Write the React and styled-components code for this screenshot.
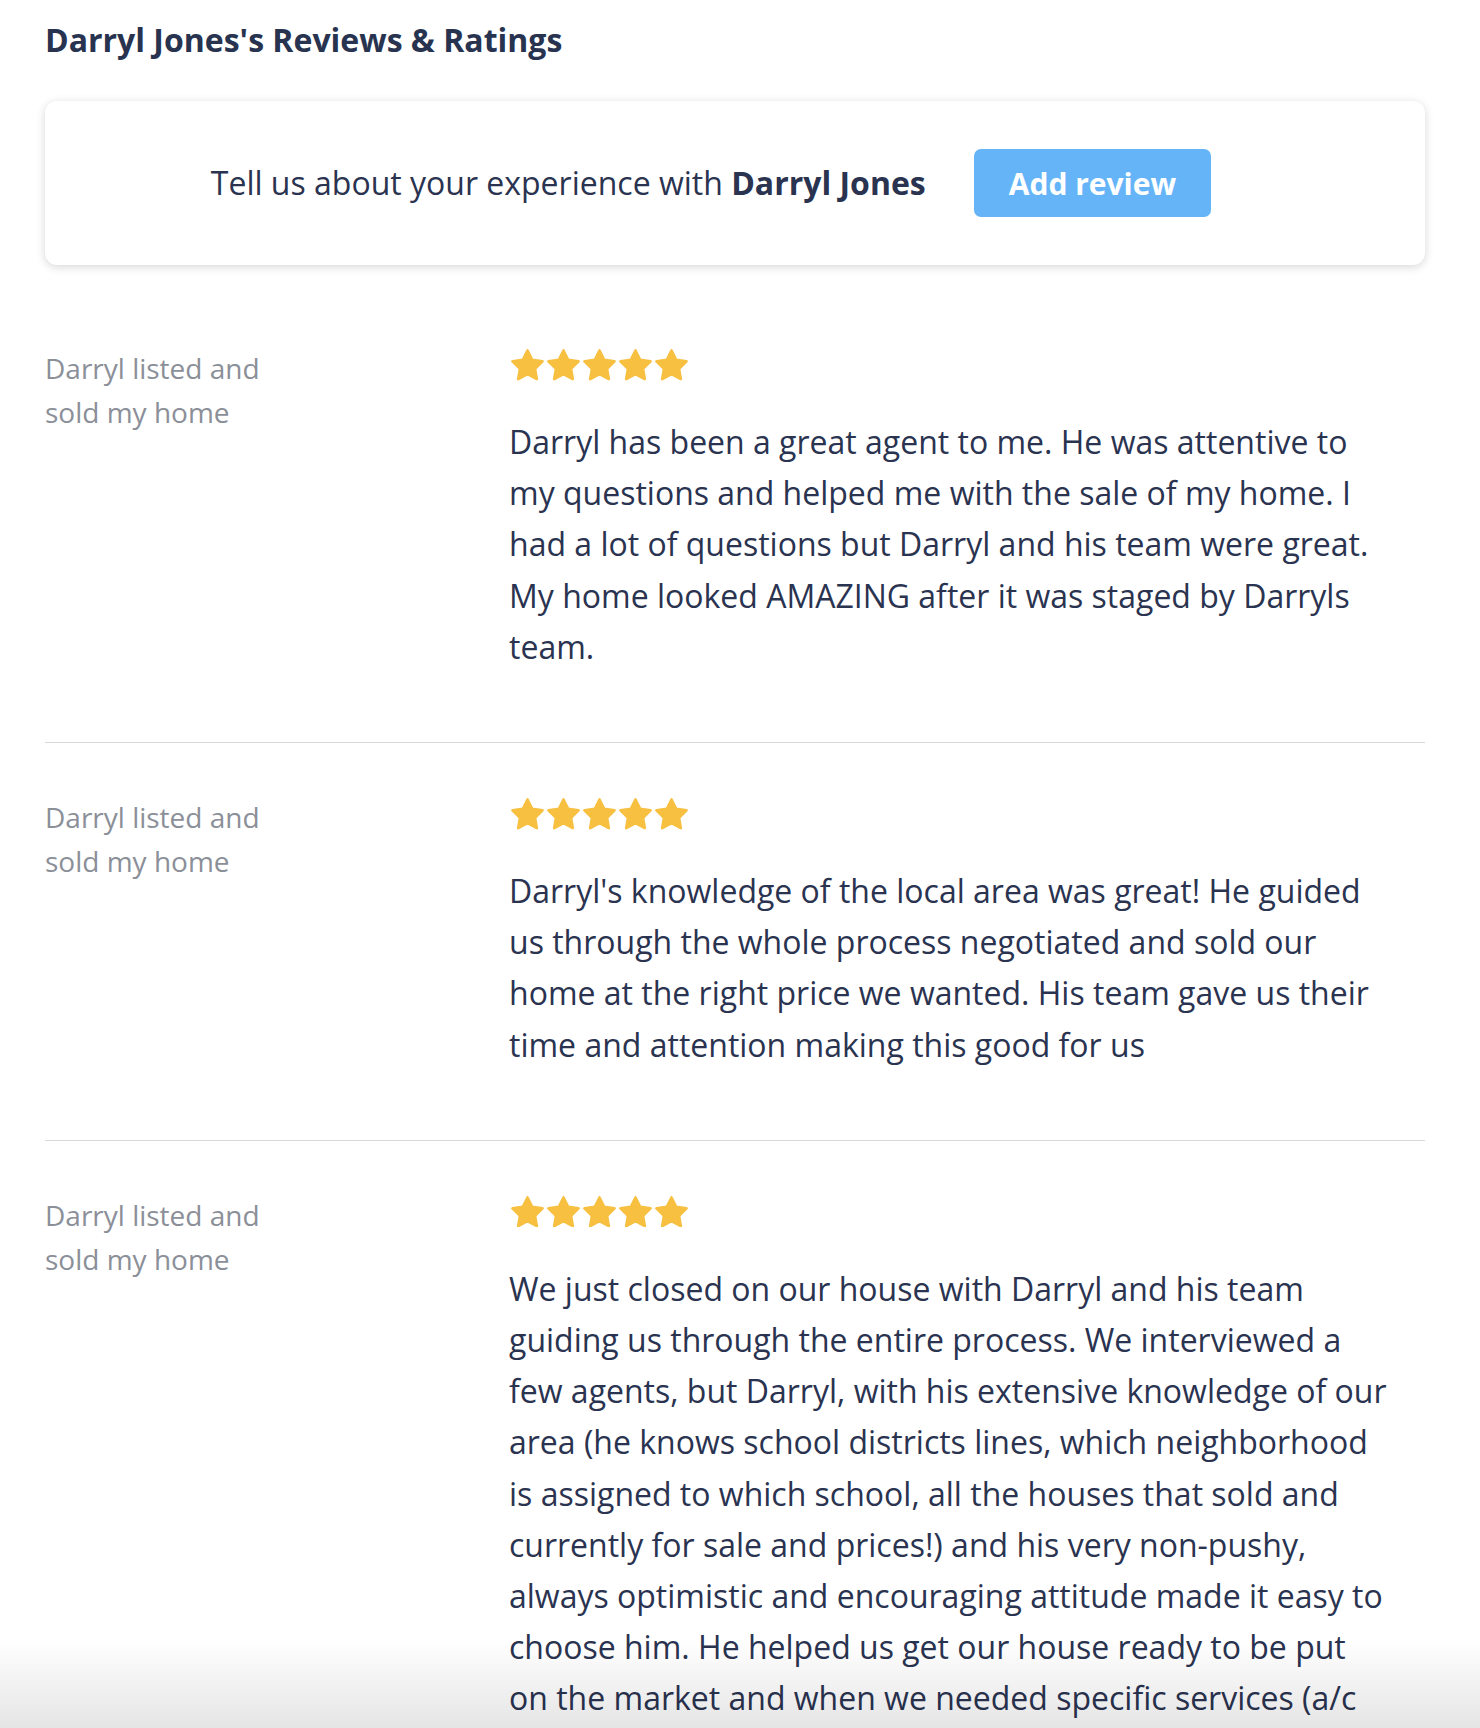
import React from "react";
import styled, { createGlobalStyle } from "styled-components";

const GlobalStyle = createGlobalStyle`
  html, body {
    margin: 0;
    padding: 0;
    background: #ffffff;
  }
  body {
    font-family: "Open Sans", "Liberation Sans", sans-serif;
    color: #2a3350;
    -webkit-font-smoothing: antialiased;
  }
  * { box-sizing: border-box; }
`;

const Page = styled.div`
  height: 100vh;
  overflow: hidden;
  padding: 18px 55px 0 45px;
`;

const Title = styled.h1`
  margin: 0;
  font-size: 32px;
  line-height: 44px;
  font-weight: 700;
  color: #283350;
`;

const PromptCard = styled.div`
  margin-top: 39px;
  height: 164px;
  background: #fff;
  border-radius: 12px;
  box-shadow: 0 2px 10px rgba(0, 0, 0, 0.16);
  display: flex;
  align-items: center;
  justify-content: center;
  gap: 48px;
  padding-right: 48px;
`;

const PromptText = styled.p`
  margin: 0;
  font-size: 32px;
  line-height: 44px;
  color: #2a3350;
  strong { font-weight: 700; }
`;

const AddButton = styled.button`
  height: 68px;
  padding: 0 35px;
  border: none;
  border-radius: 7px;
  background: #66b4f8;
  color: #fff;
  font-family: inherit;
  font-size: 30px;
  font-weight: 700;
  cursor: pointer;
`;

const ReviewList = styled.div`
  margin-top: 29px;
`;

const ReviewRow = styled.div`
  display: grid;
  grid-template-columns: 464px 1fr;
  padding: 52px 0 70px;
  border-bottom: 1px solid #d8d8d8;
`;

const Label = styled.div`
  font-size: 28px;
  line-height: 44px;
  color: #8b8f98;
  width: 240px;
`;

const Body = styled.div`
  padding-right: 36px;
`;

const Stars = styled.div`
  display: flex;
  gap: 3px;
  height: 32px;
  margin-top: 3px;
  margin-left: 2px;
`;

const ReviewText = styled.p`
  margin: 35px 0 0;
  font-size: 32px;
  line-height: 51.2px;
  color: #2a3350;
`;

const BottomFade = styled.div`
  position: fixed;
  left: 0;
  right: 0;
  bottom: 0;
  height: 88px;
  pointer-events: none;
  background: linear-gradient(to bottom, rgba(0, 0, 0, 0), rgba(0, 0, 0, 0.1));
`;

const Star = () => (
  <svg width="33" height="31.5" viewBox="1 1 22 21" aria-hidden="true">
    <polygon
      points="12,2 15.09,8.26 22,9.27 17,14.14 18.18,21.02 12,17.77 5.82,21.02 7,14.14 2,9.27 8.91,8.26"
      fill="#f7c040"
      stroke="#f7c040"
      strokeWidth="1.8"
      strokeLinejoin="round"
    />
  </svg>
);

const reviews = [
  {
    label: "Darryl listed and sold my home",
    text: "Darryl has been a great agent to me. He was attentive to my questions and helped me with the sale of my home. I had a lot of questions but Darryl and his team were great. My home looked AMAZING after it was staged by Darryls team.",
  },
  {
    label: "Darryl listed and sold my home",
    text: "Darryl's knowledge of the local area was great! He guided us through the whole process negotiated and sold our home at the right price we wanted. His team gave us their time and attention making this good for us",
  },
  {
    label: "Darryl listed and sold my home",
    text: "We just closed on our house with Darryl and his team guiding us through the entire process. We interviewed a few agents, but Darryl, with his extensive knowledge of our area (he knows school districts lines, which neighborhood is assigned to which school, all the houses that sold and currently for sale and prices!) and his very non-pushy, always optimistic and encouraging attitude made it easy to choose him. He helped us get our house ready to be put on the market and when we needed specific services (a/c repair, painting, cleaning) he always had a great recommendation for us.",
  },
];

export default function App() {
  return (
    <>
      <GlobalStyle />
      <Page>
        <Title>Darryl Jones's Reviews &amp; Ratings</Title>
        <PromptCard>
          <PromptText>
            Tell us about your experience with <strong>Darryl Jones</strong>
          </PromptText>
          <AddButton>Add review</AddButton>
        </PromptCard>
        <ReviewList>
          {reviews.map((r, i) => (
            <ReviewRow key={i}>
              <Label>{r.label}</Label>
              <Body>
                <Stars>
                  {[0, 1, 2, 3, 4].map((s) => (
                    <Star key={s} />
                  ))}
                </Stars>
                <ReviewText>{r.text}</ReviewText>
              </Body>
            </ReviewRow>
          ))}
        </ReviewList>
      </Page>
      <BottomFade />
    </>
  );
}
